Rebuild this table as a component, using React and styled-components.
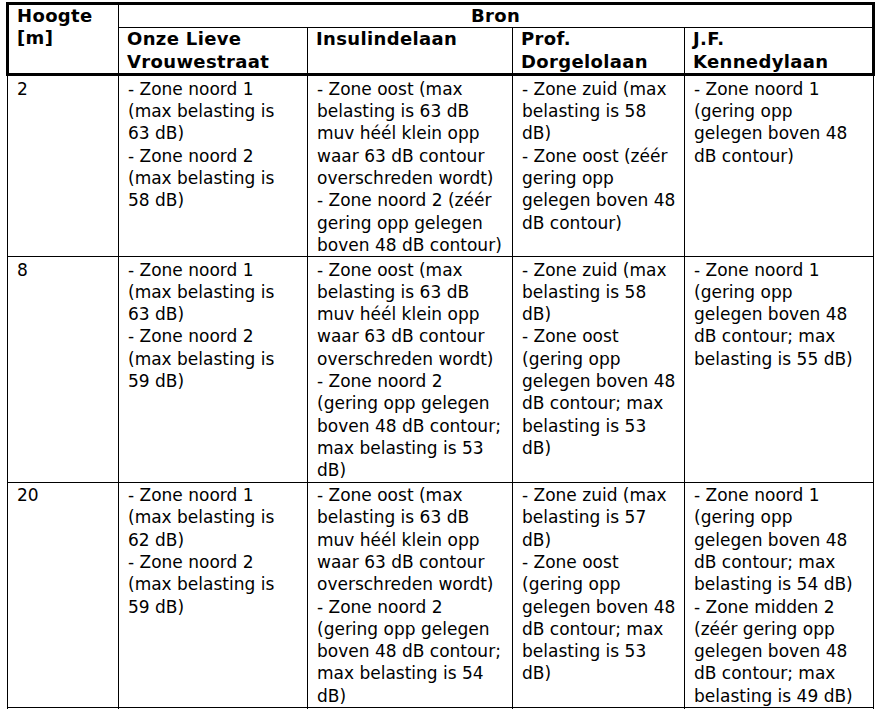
import React from 'react'
import styled, { createGlobalStyle } from 'styled-components'

const GlobalStyle = createGlobalStyle`
  html, body {
    margin: 0;
    padding: 0;
    background: #fff;
  }
  body {
    font-family: "DejaVu Sans", Verdana, sans-serif;
    color: #000;
    overflow: hidden;
  }
`

const Page = styled.div`
  padding: 2px 0 0 6px;
`

const Table = styled.table`
  border-collapse: collapse;
  table-layout: fixed;
  width: 867px;
  font-size: 17px;
  line-height: 22.3px;
`

const Head = styled.thead`
  border: 3.5px solid #000;
`

const HeadCell = styled.th`
  border: 1px solid #000;
  padding: 0 8px;
  text-align: ${(p) => (p.$center ? 'center' : 'left')};
  vertical-align: top;
  font-size: 18px;
  line-height: 22.4px;
  font-weight: bold;
  letter-spacing: 0.35px;
  white-space: nowrap;
`

const Cell = styled.td`
  border: 1px solid #000;
  padding: 1.5px 8px 0 9px;
  vertical-align: top;
  white-space: nowrap;
  height: ${(p) => (p.$h ? `${p.$h}px` : 'auto')};
`

const Line = styled.span`
  display: block;
`

const cols = [111, 189, 205, 172, 189]

const rows = [
  {
    h: '2',
    cells: [
      ['- Zone noord 1', '(max belasting is', '63 dB)', '- Zone noord 2', '(max belasting is', '58 dB)'],
      ['- Zone oost (max', 'belasting is 63 dB', 'muv héél klein opp', 'waar 63 dB contour', 'overschreden wordt)', '- Zone noord 2 (zéér', 'gering opp gelegen', 'boven 48 dB contour)'],
      ['- Zone zuid (max', 'belasting is 58', 'dB)', '- Zone oost (zéér', 'gering opp', 'gelegen boven 48', 'dB contour)'],
      ['- Zone noord 1', '(gering opp', 'gelegen boven 48', 'dB contour)'],
    ],
  },
  {
    h: '8',
    cells: [
      ['- Zone noord 1', '(max belasting is', '63 dB)', '- Zone noord 2', '(max belasting is', '59 dB)'],
      ['- Zone oost (max', 'belasting is 63 dB', 'muv héél klein opp', 'waar 63 dB contour', 'overschreden wordt)', '- Zone noord 2', '(gering opp gelegen', 'boven 48 dB contour;', 'max belasting is 53', 'dB)'],
      ['- Zone zuid (max', 'belasting is 58', 'dB)', '- Zone oost', '(gering opp', 'gelegen boven 48', 'dB contour; max', 'belasting is 53', 'dB)'],
      ['- Zone noord 1', '(gering opp', 'gelegen boven 48', 'dB contour; max', 'belasting is 55 dB)'],
    ],
  },
  {
    h: '20',
    cells: [
      ['- Zone noord 1', '(max belasting is', '62 dB)', '- Zone noord 2', '(max belasting is', '59 dB)'],
      ['- Zone oost (max', 'belasting is 63 dB', 'muv héél klein opp', 'waar 63 dB contour', 'overschreden wordt)', '- Zone noord 2', '(gering opp gelegen', 'boven 48 dB contour;', 'max belasting is 54', 'dB)'],
      ['- Zone zuid (max', 'belasting is 57', 'dB)', '- Zone oost', '(gering opp', 'gelegen boven 48', 'dB contour; max', 'belasting is 53', 'dB)'],
      ['- Zone noord 1', '(gering opp', 'gelegen boven 48', 'dB contour; max', 'belasting is 54 dB)', '- Zone midden 2', '(zéér gering opp', 'gelegen boven 48', 'dB contour; max', 'belasting is 49 dB)'],
    ],
  },
]

const Lines = ({ items }) => items.map((t, i) => <Line key={i}>{t}</Line>)

const App = () => (
  <Page>
    <GlobalStyle />
    <Table>
      <colgroup>
        {cols.map((w, i) => <col key={i} style={{ width: w }} />)}
      </colgroup>
      <Head>
        <tr>
          <HeadCell rowSpan={2}>
            <Line>Hoogte</Line>
            <Line>[m]</Line>
          </HeadCell>
          <HeadCell colSpan={4} $center>Bron</HeadCell>
        </tr>
        <tr>
          <HeadCell><Lines items={['Onze Lieve', 'Vrouwestraat']} /></HeadCell>
          <HeadCell><Lines items={['Insulindelaan']} /></HeadCell>
          <HeadCell><Lines items={['Prof.', 'Dorgelolaan']} /></HeadCell>
          <HeadCell><Lines items={['J.F.', 'Kennedylaan']} /></HeadCell>
        </tr>
      </Head>
      <tbody>
        {rows.map((r) => (
          <tr key={r.h}>
            <Cell>{r.h}</Cell>
            {r.cells.map((c, i) => (
              <Cell key={i}><Lines items={c} /></Cell>
            ))}
          </tr>
        ))}
        <tr>
          <Cell $h={40} />
          <Cell />
          <Cell />
          <Cell />
          <Cell />
        </tr>
      </tbody>
    </Table>
  </Page>
)

export default App
